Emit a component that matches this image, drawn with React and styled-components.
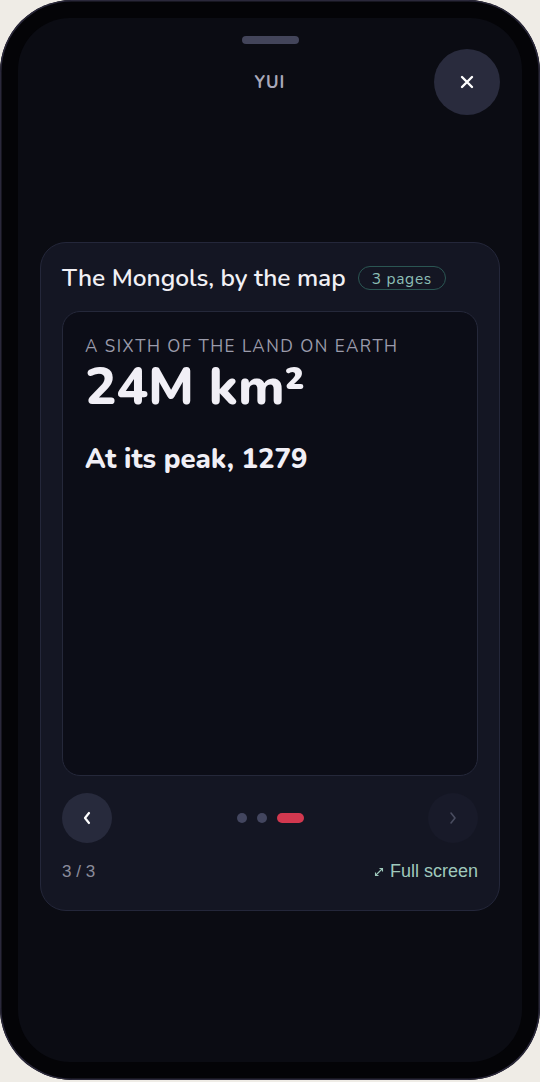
import React from 'react'
import styled, { createGlobalStyle } from 'styled-components'

const GlobalStyle = createGlobalStyle`
    html, body {
        margin: 0;
        padding: 0;
        background: #efece6;
    }
    * { box-sizing: border-box; }
`;

const Phone = styled.div`
    width: 540px;
    height: 1080px;
    padding: 18px;
    border-radius: 72px;
    background: #040407;
    box-shadow: inset 0 0 0 1.5px #2a283a;`;

const Screen = styled.div`
    height: 100%;
    border-radius: 52px;
    background: #0b0c13;
    display: flex;
    flex-direction: column;
    align-items: center;
    padding: 18px 22px 0;
    font-family: "Nunito", "Lato", sans-serif;`;

const Handle = styled.div`
    width: 57px;
    height: 8px;
    border-radius: 4px;
    background: #43455a;`;

const Header = styled.div`
    width: 100%;
    display: grid;
    grid-template-columns: 1fr auto 1fr;
    align-items: center;
    margin-top: 5px;`;

const Brand = styled.div`
    grid-column: 2;
    color: #a9a9b9;
    font-weight: 700;
    font-size: 17px;
    letter-spacing: 1px;`;

const CloseButton = styled.button`
    justify-self: end;
    width: 66px;
    height: 66px;
    border-radius: 50%;
    border: none;
    background: #292b3d;
    color: #ffffff;
    display: flex;
    align-items: center;
    justify-content: center;
    padding: 0;`;

const Card = styled.section`
    width: 100%;
    margin-top: 127px;
    padding: 22px 21px 28px;
    border-radius: 26px;
    background: #141623;
    border: 1px solid #24273a;`;

const TitleRow = styled.div`
    display: flex;
    align-items: center;
    gap: 12px;
    height: 26px;`;

const Title = styled.h2`
    margin: 0;
    color: #f1f0f5;
    font-size: 24.5px;
    font-weight: 600;
    line-height: 26px;`;

const Badge = styled.span`
    padding: 0 13px;
    height: 24px;
    display: flex;
    align-items: center;
    border-radius: 12px;
    border: 1.5px solid #2b5653;
    color: #8dbfb6;
    font-size: 15.5px;
    letter-spacing: 0.7px;`;

const Panel = styled.div`
    margin-top: 20px;
    height: 465px;
    padding: 25px 22px;
    border-radius: 18px;
    background: #0c0d17;
    border: 1px solid #25283a;`;

const Eyebrow = styled.div`
    color: #9b9bab;
    font-size: 17px;
    letter-spacing: 1.5px;
    line-height: 20px;`;

const BigStat = styled.div`
    margin-top: 2px;
    color: #f1eff6;
    font-size: 52.5px;
    font-weight: 800;
    line-height: 56px;`;

const SubStat = styled.div`
    margin-top: 28px;
    color: #f1eff6;
    font-size: 27.5px;
    font-weight: 800;
    line-height: 32px;`;

const NavRow = styled.div`
    margin-top: 17px;
    display: flex;
    align-items: center;
    justify-content: space-between;`;

const NavButton = styled.button`
    width: 50px;
    height: 50px;
    border-radius: 50%;
    border: none;
    padding: 0;
    background: ${p => (p.disabled ? '#181a29' : '#272a3c')};
    color: ${p => (p.disabled ? '#4a4d60' : '#ffffff')};
    display: flex;
    align-items: center;
    justify-content: center;`;

const Dots = styled.div`
    display: flex;
    gap: 10px;
    align-items: center;`;

const Dot = styled.span`
    width: ${p => (p.active ? '27px' : '10px')};
    height: 10px;
    border-radius: 5px;
    background: ${p => (p.active ? '#d2384f' : '#43465f')};`;

const FooterRow = styled.div`
    margin-top: 18px;
    display: flex;
    align-items: center;
    justify-content: space-between;
    font-family: "Liberation Sans", Arial, sans-serif;`;

const Counter = styled.span`
    color: #8b8c9b;
    font-size: 17px;`;

const FullScreen = styled.span`
    color: #9fc9bc;
    font-size: 18px;
    display: flex;
    align-items: center;
    gap: 6px;`;

const pages = 3
const current = 3

function App() {
    return (
        <>
            <GlobalStyle />
            <Phone>
                <Screen>
                    <Handle />
                    <Header>
                        <Brand>YUI</Brand>
                        <CloseButton aria-label="Close">
                            <svg width="14" height="14" viewBox="0 0 14 14">
                                <path d="M2 2 L12 12 M12 2 L2 12" stroke="#fff" strokeWidth="2.4" strokeLinecap="round" />
                            </svg>
                        </CloseButton>
                    </Header>
                    <Card>
                        <TitleRow>
                            <Title>The Mongols, by the map</Title>
                            <Badge>{pages} pages</Badge>
                        </TitleRow>
                        <Panel>
                            <Eyebrow>A SIXTH OF THE LAND ON EARTH</Eyebrow>
                            <BigStat>24M km²</BigStat>
                            <SubStat>At its peak, 1279</SubStat>
                        </Panel>
                        <NavRow>
                            <NavButton aria-label="Previous">
                                <svg width="10" height="16" viewBox="0 0 10 16">
                                    <path d="M7 3 L3 8 L7 13" fill="none" stroke="currentColor" strokeWidth="2.2" strokeLinecap="round" strokeLinejoin="round" />
                                </svg>
                            </NavButton>
                            <Dots>
                                {Array.from({ length: pages }).map((_, i) => (
                                    <Dot key={i} active={i + 1 === current} />
                                ))}
                            </Dots>
                            <NavButton disabled aria-label="Next">
                                <svg width="10" height="16" viewBox="0 0 10 16">
                                    <path d="M3 3 L7 8 L3 13" fill="none" stroke="currentColor" strokeWidth="1.6" strokeLinecap="round" strokeLinejoin="round" />
                                </svg>
                            </NavButton>
                        </NavRow>
                        <FooterRow>
                            <Counter>{current} / {pages}</Counter>
                            <FullScreen>
                                <svg width="10" height="10" viewBox="0 0 10 10">
                                    <path d="M1.5 8.5 L8.5 1.5 M5.5 1.5 H8.5 V4.5 M1.5 5.5 V8.5 H4.5" fill="none" stroke="#9fc9bc" strokeWidth="1.1" />
                                </svg>
                                Full screen
                            </FullScreen>
                        </FooterRow>
                    </Card>
                </Screen>
            </Phone>
        </>
    )
}
export default App
